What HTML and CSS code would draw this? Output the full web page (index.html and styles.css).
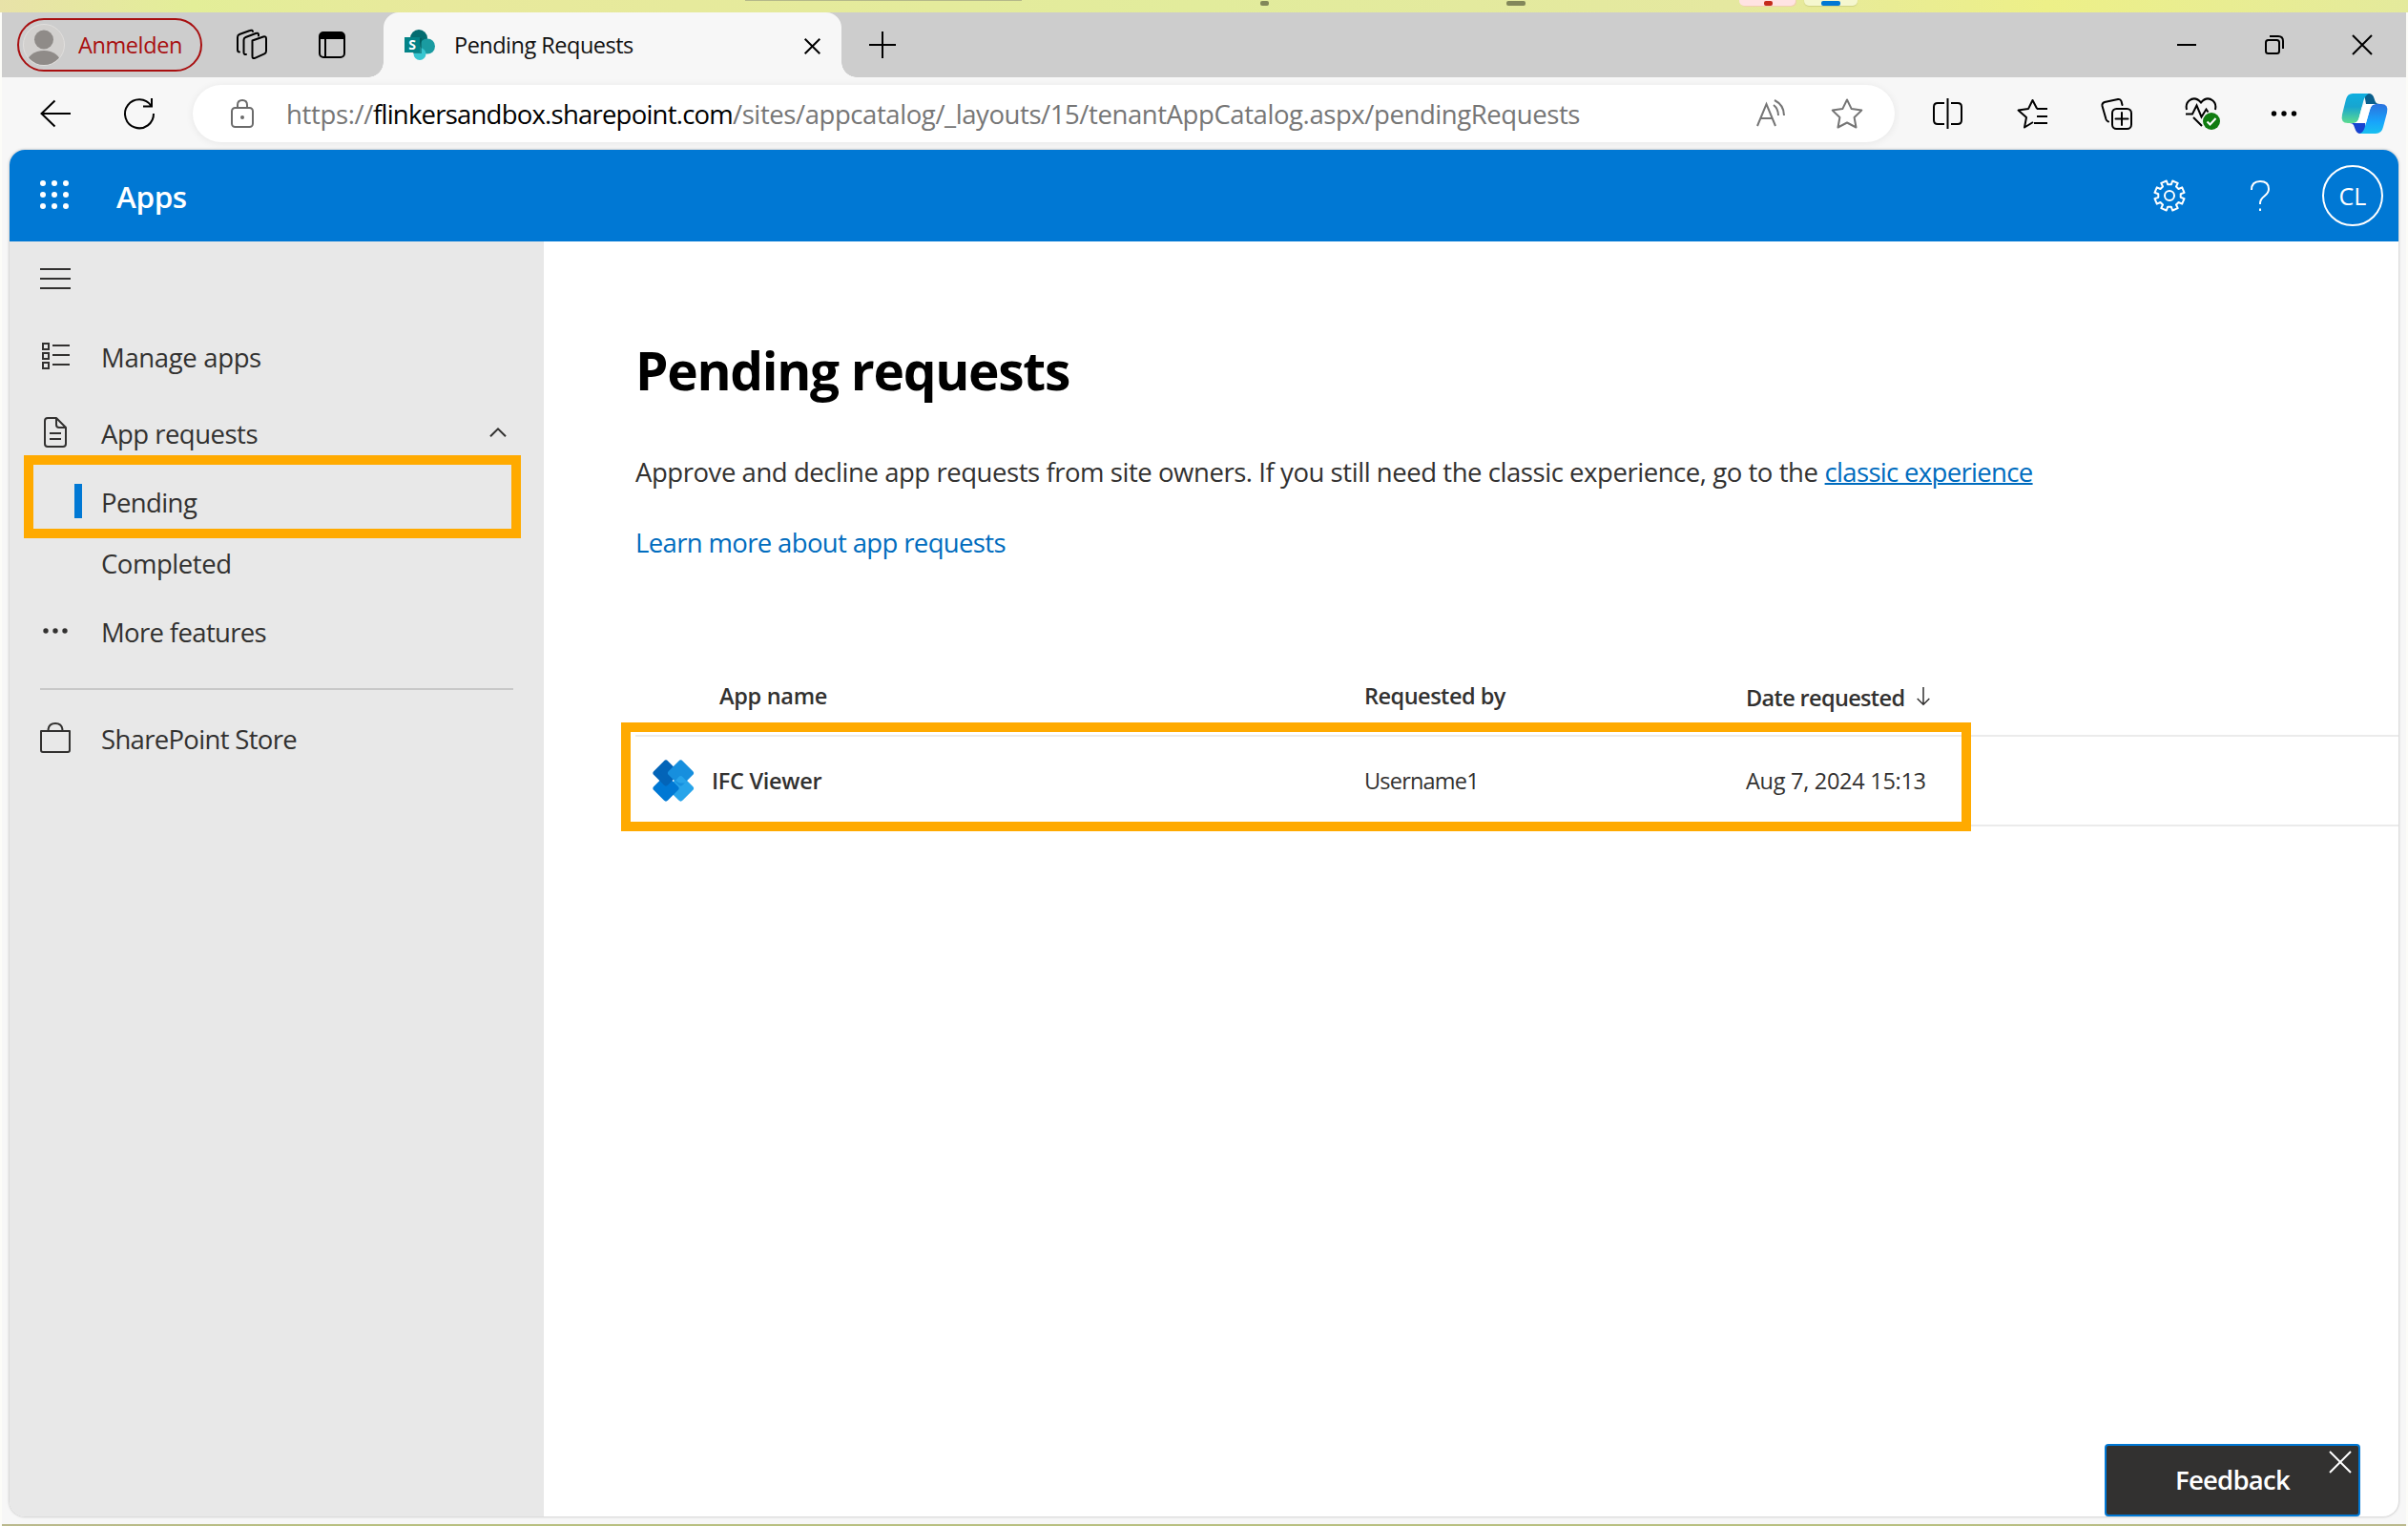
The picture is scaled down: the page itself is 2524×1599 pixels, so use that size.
FILE: index.html
```html
<!DOCTYPE html>
<html lang="en">
<head>
<meta charset="utf-8">
<title>Pending Requests</title>
<link rel="stylesheet" href="styles.css">
</head>
<body>
<div class="desktop">
  <div class="taskbar">
    <span class="tb-line"></span><span class="tb-dot"></span><span class="tb-bar"></span>
    <span class="tb-pill tb-pink"><i class="tb-red"></i></span>
    <span class="tb-pill tb-pale"><i class="tb-blue"></i></span>
  </div>
  <div class="window">
    <div class="tabstrip">
      <div class="profile">
        <svg class="avatar" width="44" height="44" viewBox="0 0 44 44"><defs><clipPath id="av"><circle cx="22" cy="22" r="21"/></clipPath></defs><circle cx="22" cy="22" r="21.5" fill="#d2d0ce" stroke="#e1dfdd"/><g clip-path="url(#av)" fill="#8f8b88"><circle cx="22" cy="16.500" r="10"/><ellipse cx="22" cy="42" rx="18" ry="14"/></g></svg>
        <span class="t signin">Anmelden</span>
      </div>
      <svg class="ic-work" width="34" height="34" viewBox="0 0 34 34" fill="none" stroke="#000" stroke-width="2" stroke-linejoin="round" stroke-linecap="round"><path d="M17.500 12.500 29 8.500q3-.8 3 2v13q0 2-1.800 2.800l-10 4.500q-2.700 1-2.700-1.800V14.500q0-1.500 0-2z"/><path d="M24 7.500V6q-.5-2-3-1L10.500 9q-2 .8-2 3v13q.2 2.500 2.500 2"/><path d="M18 3q-.5-2-3-1L4 6Q2 6.800 2 9v13q0 2.500 2 2.500"/></svg>
      <svg class="ic-tabs" width="28" height="28" viewBox="0 0 28 28"><rect x="1" y="1" width="26" height="26" rx="4" fill="none" stroke="#000" stroke-width="2"/><path d="M1 5q0-4 4-4h18q4 0 4 4v3H1z"/><path d="M7 8v19" stroke="#000" stroke-width="2"/></svg>
      <div class="tab">
        <svg width="32" height="32" viewBox="0 0 32 32"><circle cx="15" cy="9" r="9" fill="#036c70"/><circle cx="24" cy="17.500" r="8" fill="#1a9ba1"/><circle cx="16" cy="25.500" r="6.500" fill="#37c6d0"/><path d="M5 9h13v16H9z" fill="#024f52" opacity=".5"/><rect y="8" width="16" height="16" fill="#038387"/><text x="8" y="21" text-anchor="middle" class="sp-s">S</text></svg>
        <span class="t tabtitle">Pending Requests</span>
        <svg class="tab-x" width="17" height="17" viewBox="0 0 17 17" stroke="#000" stroke-width="2"><path d="M.7.7l15.600 15.600M16.300.7L.7 16.300"/></svg>
      </div>
      <svg class="newtab" width="28" height="28" viewBox="0 0 28 28" stroke="#000" stroke-width="2"><path d="M0 14h28M14 0v28"/></svg>
      <div class="winctl">
        <svg width="20" height="20" viewBox="0 0 20 20" stroke="#000" stroke-width="2"><path d="M0 10h20"/></svg>
        <svg width="20" height="20" viewBox="0 0 20 20" fill="none" stroke="#000" stroke-width="2"><rect x="1" y="5" width="14" height="14" rx="2.500"/><path d="M5 1h9q5 0 5 5v8"/></svg>
        <svg width="20" height="20" viewBox="0 0 20 20" stroke="#000" stroke-width="2"><path d="M0 0l20 20M20 0L0 20"/></svg>
      </div>
    </div>
    <div class="toolbar">
      <svg class="back" width="32" height="28" viewBox="0 0 32 28" fill="none" stroke="#000" stroke-width="2"><path d="M15.500.5L1.500 14l14 13.500M1.500 14H32"/></svg>
      <svg class="reload" width="34" height="34" viewBox="0 0 34 34" fill="none" stroke="#000" stroke-width="2"><path d="M31 17A15 15 0 1 1 28.500 9M29 1v8.500h-9"/></svg>
      <div class="address">
        <svg class="lock" width="24" height="30" viewBox="0 0 24 30" fill="none" stroke="#6b6b6b" stroke-width="2"><rect x="1" y="9" width="22" height="20" rx="3.500"/><path d="M7 9V6q0-5 5-5t5 5v3"/><circle cx="12" cy="19" r="2" fill="#6b6b6b" stroke="none"/></svg>
        <span class="url"><span class="t u1">https://</span><span class="t u2">flinkersandbox.sharepoint.com</span><span class="t u3">/sites/appcatalog/_layouts/15/tenantAppCatalog.aspx/pendingRequests</span></span>
        <svg class="read" width="32" height="30" viewBox="0 0 32 30" fill="none" stroke="#757575" stroke-width="2"><path d="M1 28L10.500 5 20 28M4.500 20h12M18 6q5 4 5 11M19 1q10 5 10 16"/></svg>
        <svg class="star" width="34" height="32" viewBox="0 0 34 32" fill="none" stroke="#757575" stroke-width="2" stroke-linejoin="round"><path d="M17 1.500l4.700 9.600 10.600 1.500-7.700 7.400 1.900 10.500L17 25.500 7.500 30.500 9.400 20 1.700 12.600l10.600-1.500z"/></svg>
      </div>
      <div class="tools">
        <svg width="32" height="32" viewBox="0 0 32 32" fill="none" stroke="#000" stroke-width="2"><path d="M12 5H5Q1 5 1 9v14q0 4 4 4h7M19 5h7q4 0 4 4v14q0 4-4 4h-7M15.500 0v32"/></svg>
        <svg class="g56" width="34" height="32" viewBox="0 0 34 32" fill="none" stroke="#000" stroke-width="2" stroke-linejoin="round"><path d="M17 25L8 30.500 10 20 1.500 12.600l10.500-1.500L16.500 2l4.700 9M21 11h11M21 19h11M18 26h14"/></svg>
        <svg class="g54" width="34" height="34" viewBox="0 0 34 34" fill="none" stroke="#000" stroke-width="2" stroke-linecap="round"><rect x="12" y="12" width="20" height="21" rx="4.500"/><path d="M22 16v13M15.500 22.500h13M22.500 8l-1-4q-1-2.500-3.500-2L4 5Q1 6 1.500 9l4 14q.7 2 2.500 2.500"/></svg>
        <svg class="g54" width="38" height="34" viewBox="0 0 38 34" fill="none" stroke="#000" stroke-width="2"><path d="M2 13Q.5 7 4.500 3.500q6.500-5 12.500 2 6-7 12.500-2Q33.500 7 32 13M1 17.500h7l4.500-9 5 12 5-8 2 3M9 21l9 9"/><circle cx="28" cy="25" r="9" fill="#107c10" stroke="none"/><path d="M23.500 25.500l3 3 6-6.500" stroke="#fff"/></svg>
        <svg class="g52" width="28" height="8" viewBox="0 0 28 8"><circle cx="3.500" cy="4" r="2.700"/><circle cx="14" cy="4" r="2.700"/><circle cx="24.500" cy="4" r="2.700"/></svg>
        <svg class="g46" width="50" height="44" viewBox="0 0 50 44"><defs><linearGradient id="cg1" x1="0" y1="0" x2="0" y2="1"><stop offset="0" stop-color="#0fafe0"/><stop offset=".45" stop-color="#18a5cf"/><stop offset="1" stop-color="#5ddc90"/></linearGradient><linearGradient id="cg2" x1="0" y1="0" x2="0" y2="1"><stop offset="0" stop-color="#2b72de"/><stop offset=".6" stop-color="#18a4fb"/><stop offset="1" stop-color="#18c0f0"/></linearGradient></defs><path d="M24 1h5q4 0 5.500 5l1 3q1 3 5 3H26z" fill="#0a5f8c"/><path d="M26 43h-6q-4 0-5.500-5l-1.500-4q-1-2-4-2h16z" fill="#1743d0"/><path d="M10 1h19q-4 2-5.500 7l-5 19q-1.500 5-6 5H7q-8 0-6-9L5 7q1.500-6 7-6z" fill="url(#cg1)"/><path d="M38 43H19q4-1 5.500-6l5.500-19q1.500-6 6-6h6q8 0 6 9l-4 15q-1.500 7-8 7z" fill="url(#cg2)"/><path d="M27 12h9q-4.500 0-6 6l-4 14H12.500q4.500 0 6-5l3-11q1-4 5.500-4z" fill="#fff"/></svg>
      </div>
    </div>
    <div class="page">
      <header class="suite">
        <svg class="waffle" width="30" height="30" viewBox="0 0 30 30" fill="#fff"><circle cx="3" cy="3" r="3"/><circle cx="15" cy="3" r="3"/><circle cx="27" cy="3" r="3"/><circle cx="3" cy="15" r="3"/><circle cx="15" cy="15" r="3"/><circle cx="27" cy="15" r="3"/><circle cx="3" cy="27" r="3"/><circle cx="15" cy="27" r="3"/><circle cx="27" cy="27" r="3"/></svg>
        <span class="t apps">Apps</span>
        <svg class="gear" width="34" height="34" viewBox="-17 -17 34 34" fill="none" stroke="#fff" stroke-width="2" stroke-linejoin="round"><circle r="5"/><path d="M-3.200-15.500L-1.800-11.700h3.600L3.200-15.500 8.700-13.200 7-9.500 9.500-7l3.700-1.700 2.300 5.500-3.800 1.400v3.600l3.800 1.400-2.300 5.500L9.500 7 7 9.500l1.700 3.700-5.500 2.300-1.400-3.800h-3.600l-1.400 3.800-5.500-2.300L-7 9.500-9.500 7l-3.700 1.700-2.300-5.500 3.800-1.400v-3.600l-3.800-1.400 2.300-5.500L-9.500-7-7-9.500l-1.700-3.700z"/></svg>
        <svg class="help" width="20" height="32" viewBox="0 0 20 32" fill="none" stroke="#fff" stroke-width="2"><path d="M1 10Q1 1 10 1t9 8q0 4-4.500 7.500Q10 20 10 24v1M10 29.500V32"/></svg>
        <span class="me"><span class="t mi">CL</span></span>
      </header>
      <div class="body">
        <nav class="side">
          <div class="burger"><svg width="32" height="22" viewBox="0 0 32 22" stroke="#323130" stroke-width="2"><path d="M0 1h32M0 11h32M0 21h32"/></svg></div>
          <a class="item"><span class="ico"><svg width="29" height="28" viewBox="0 0 29 28" fill="none" stroke="#323130" stroke-width="2"><path d="M1 1h6v6H1zM1 11h6v6H1zM1 21h6v6H1zM11 3h18M11 13h18M11 23h18"/></svg></span><span class="t n1">Manage apps</span></a>
          <a class="item"><span class="ico"><svg width="24" height="32" viewBox="0 0 24 32" fill="none" stroke="#323130" stroke-width="2" stroke-linejoin="round"><path d="M1 4q0-3 3-3h9l10 10v17q0 3-3 3H4q-3 0-3-3zM13 1v7q0 3 3 3h7M6 17h12M6 23h12"/></svg></span><span class="t n2">App requests</span><svg class="chev" width="18" height="10" viewBox="0 0 18 10" fill="none" stroke="#323130" stroke-width="2"><path d="M1 9.300l8-8 8 8"/></svg></a>
          <a class="item sub active"><span class="t n3">Pending</span><span class="mark"></span></a>
          <a class="item sub"><span class="t n4">Completed</span></a>
          <a class="item"><span class="ico"><svg width="26" height="6" viewBox="0 0 26 6" fill="#323130"><circle cx="3" cy="3" r="2.700"/><circle cx="13" cy="3" r="2.700"/><circle cx="23" cy="3" r="2.700"/></svg></span><span class="t n5">More features</span></a>
          <hr class="rule">
          <a class="item"><span class="ico"><svg width="32" height="32" viewBox="0 0 32 32" fill="none" stroke="#323130" stroke-width="2" stroke-linejoin="round"><path d="M1 9h30v20q0 2-2 2H3q-2 0-2-2zM8.500 9q0-8 7.500-8t7.500 8"/></svg></span><span class="t n6">SharePoint Store</span></a>
        </nav>
        <main class="main">
          <h1><span class="t h">Pending requests</span></h1>
          <p class="lead"><span class="t p1">Approve and decline app requests from site owners. If you still need the classic experience, go to the</span> <a class="t p2 link under">classic experience</a></p>
          <p class="learn"><a class="t p3 link">Learn more about app requests</a></p>
          <div class="table">
            <div class="row head"><div class="c1"><span class="t t1">App name</span></div><div><span class="t t2">Requested by</span></div><div class="date"><span class="t t3">Date requested</span><svg width="14" height="20" viewBox="0 0 14 20" fill="none" stroke="#323130" stroke-width="1.500"><path d="M7 0v18M.7 12L7 18.300l6.300-6.300"/></svg></div></div>
            <div class="row data"><div class="c1"><svg width="46" height="46" viewBox="0 0 46 46"><g stroke-width="6" stroke-linejoin="round"><path fill="#27a4ea" stroke="#27a4ea" d="M30.500 20.500L41 31 30.500 41.500 20 31z"/><path fill="#0078d4" stroke="#0078d4" d="M15 20.500L25.500 31 15 41.500 4.500 31z"/><path fill="#0364b8" stroke="#0364b8" d="M15 4.500L25.500 15 15 25.500 4.500 15z"/><path fill="#178fde" stroke="#178fde" d="M30.500 4.500L41 15 30.500 25.500 20 15z"/><path fill="#27a4ea" stroke="none" d="M28.500 19q2-2 4 0l6 6.500H29L25 23z"/></g></svg><span class="t r1">IFC Viewer</span></div><div><span class="t r2">Username1</span></div><div><span class="t r3">Aug 7, 2024 15:13</span></div><span class="mark"></span></div>
          </div>
        </main>
      </div>
      <div class="feedback"><span class="t fb">Feedback</span><svg width="24" height="24" viewBox="0 0 24 24" stroke="#fff" stroke-width="2"><path d="M1 1l22 22M23 1L1 23"/></svg></div>
    </div>
  </div>
</div>
</body>
</html>
```
FILE: styles.css
```css
* { box-sizing: border-box; }
body { margin: 0; font-family: "Open Sans", "Noto Sans", sans-serif; font-size: 27.5px; color: #323130; }
h1, p { margin: 0; }
svg { display: block; flex: none; overflow: visible; }
.t { white-space: nowrap; }

/* desktop edge around the browser window */
.desktop { width: 2524px; height: 1599px; background: linear-gradient(90deg, #bab98d, #b8c080 14%, #b8c080 80%, #bab98d) 2px 1597px / 2520px 2px no-repeat #fcfcf8; overflow: hidden; }
.taskbar { position: relative; height: 13px; background: linear-gradient(90deg, #e8e2a8, #e3ee98 8%, #e8e99c 18%, #e2ec9c 50%, #e5e8a0 72%, #edf088 85%, #e4ea9c); }
.taskbar span, .taskbar i { position: absolute; }
.tb-line { left: 781px; top: 0; width: 290px; height: 1px; background: #b5b98a; }
.tb-dot { left: 1321px; top: 1px; width: 9px; height: 5px; border-radius: 2px; background: #82875a; }
.tb-bar { left: 1579px; top: 1px; width: 20px; height: 5px; border-radius: 2px; background: #82875a; }
.tb-pill { top: -4px; height: 10px; border-radius: 5px; }
.tb-pink { left: 1823px; width: 59px; background: #ffe3e3; box-shadow: 1px 1px 0 #f0d0b0; }
.tb-pale { left: 1891px; width: 56px; background: #f5f7cf; box-shadow: 0 1px 1px #cfd286; }
.tb-red { left: 26px; top: 5px; width: 9px; height: 5px; border-radius: 2px; background: #c42b1c; }
.tb-blue { left: 18px; top: 5px; width: 20px; height: 5px; border-radius: 2px; background: #0078d4; }
.window { width: 2520px; height: 1584px; margin-left: 2px; background: #f7f7f7; }

/* tab strip */
.tabstrip { display: flex; align-items: center; height: 68px; background: #cdcdcd; padding: 0 36px 0 16px; }
.profile { display: flex; align-items: center; width: 194px; height: 56px; border: 2px solid #a80f10; border-radius: 28px; padding-left: 4px; }
.signin { margin-left: 14px; font-size: 23.5px; letter-spacing: -.4px; color: #a80f10; }
.ic-work { margin-left: 35px; }
.ic-tabs { margin-left: 53px; }
.tab { position: relative; display: flex; align-items: center; width: 480px; height: 68px; margin-left: 40px; padding: 0 22px; border-radius: 16px 16px 0 0; background: #f7f7f7; color: #111; }
.tab::before, .tab::after { content: ""; position: absolute; bottom: 0; width: 16px; height: 16px; }
.tab::before { left: -16px; background: radial-gradient(circle at 0 0, transparent 15.5px, #f7f7f7 16px); }
.tab::after { right: -16px; background: radial-gradient(circle at 100% 0, transparent 15.5px, #f7f7f7 16px); }
.tabtitle { margin-left: 20px; font-size: 23.5px; letter-spacing: -.5px; }
.tab-x { margin-left: auto; margin-top: 2px; }
.sp-s { font-size: 14px; font-weight: 700; fill: #fff; }
.newtab { margin-left: 29px; }
.winctl { display: flex; gap: 72px; margin-left: auto; }

/* toolbar */
.toolbar { display: flex; align-items: center; height: 76px; padding: 0 18px 0 40px; }
.reload { margin-left: 56px; }
.address { display: flex; align-items: center; width: 1784px; height: 60px; margin-left: 38px; padding: 0 33px 0 40px; border-radius: 30px; background: #fff; box-shadow: 0 1px 8px rgba(0,0,0,.07); }
.url { display: flex; margin-left: 34px; color: #767676; }
.u1 { letter-spacing: -.35px; }
.u2 { color: #000; letter-spacing: -.776px; }
.u3 { letter-spacing: -.416px; }
.read { margin-left: auto; }
.star { margin-left: 46px; }
.tools { display: flex; align-items: center; margin-left: auto; }
.g56 { margin-left: 56px; }
.g54 { margin-left: 54px; }
.g52 { margin-left: 52px; }
.g46 { margin-left: 46px; }

/* page */
.page { position: relative; width: 2504px; height: 1432px; margin-left: 8px; border-radius: 16px; background: #fff; box-shadow: 0 0 3px rgba(0,0,0,.3); overflow: hidden; }
.suite { display: flex; align-items: center; height: 96px; padding: 0 16px 0 32px; background: #0078d4; color: #fff; }
.waffle { margin-bottom: 2px; }
.apps { margin-left: 50px; font-size: 31.5px; font-weight: 600; letter-spacing: -.4px; }
.gear { margin-left: auto; }
.help { margin-left: 68px; }
.me { display: flex; align-items: center; justify-content: center; width: 64px; height: 64px; margin-left: 55px; border: 2px solid #fff; border-radius: 50%; }
.mi { font-size: 25px; }
.body { display: flex; height: 1336px; }

/* side navigation */
.side { width: 560px; background: #e8e8e8; }
.burger { height: 81px; padding: 28px 32px; }
.item { position: relative; display: flex; align-items: center; height: 80px; padding-left: 26px; }
.ico { display: flex; justify-content: center; width: 44px; margin-right: 26px; padding-bottom: 2px; }
.sub { height: 64px; padding-left: 96px; }
.chev { margin: 0 39px 2px auto; }
.n1 { letter-spacing: -.35px; }
.n2 { letter-spacing: -.5px; }
.n3 { letter-spacing: -.6px; }
.n4 { letter-spacing: -.45px; }
.n5 { letter-spacing: -.65px; }
.n6 { letter-spacing: -.68px; }
.active::before { content: ""; position: absolute; left: 68px; top: 13px; width: 8px; height: 36px; background: #0078d4; }
.mark { position: absolute; border: 10px solid #ffaa00; }
.active .mark { left: 15px; top: -17px; width: 521px; height: 87px; }
.rule { height: 2px; margin: 19px 32px 11px; border: 0; background: #c8c8c8; }

/* content */
.main { width: 1944px; padding: 97px 0 0 96px; }
h1 { font-size: 55px; line-height: 76px; font-weight: 700; color: #000; letter-spacing: -1.3px; }
.lead { margin-top: 49px; line-height: 40px; }
.learn { margin-top: 34px; line-height: 40px; }
.link { color: #006cbe; }
.under { text-decoration: underline; text-decoration-thickness: 2px; }
.p1 { letter-spacing: -.445px; }
.p2 { letter-spacing: -.671px; }
.p3 { letter-spacing: -.64px; }
.table { margin-top: 99px; font-size: 23.5px; }
.row { position: relative; display: grid; grid-template-columns: 764px 400px 1fr; align-items: center; border-bottom: 2px solid #ebebeb; }
.head { height: 84px; font-weight: 600; }
.head .c1 { padding-left: 88px; }
.date { display: flex; align-items: center; gap: 13px; padding-top: 4px; }
.date svg { margin-bottom: 3px; }
.data { height: 94px; }
.data .c1 { display: flex; align-items: center; padding-left: 17px; }
.t1 { letter-spacing: -.3px; }
.t2 { letter-spacing: -.5px; }
.t3 { letter-spacing: -.65px; }
.r1 { margin-left: 17px; font-weight: 600; letter-spacing: -.3px; }
.r2 { letter-spacing: -.8px; }
.r3 { letter-spacing: -.28px; }
.data .mark { left: -15px; top: -15px; width: 1415px; height: 114px; }

/* feedback button */
.feedback { position: absolute; right: 40px; bottom: 0; width: 268px; height: 76px; border: 2px solid #0078d4; border-radius: 4px; background: #323130; color: #fff; display: flex; align-items: center; padding: 0 0 2px 72px; }
.feedback svg { position: absolute; right: 7px; top: 5px; }
.fb { font-weight: 600; letter-spacing: -.75px; }
```
